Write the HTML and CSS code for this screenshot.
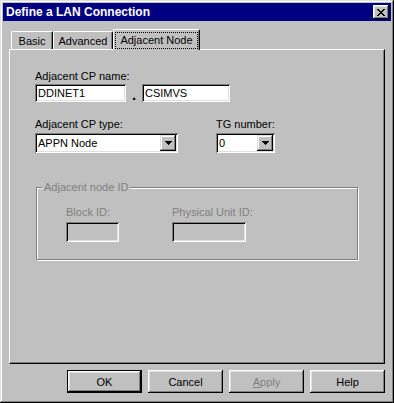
FILE: index.html
```html
<!DOCTYPE html>
<html lang="en">
<head>
    <meta charset="UTF-8">
    <meta name="viewport" content="width=device-width, initial-scale=1.0">
    <title>Define a LAN Connection</title>
    <link rel="stylesheet" href="styles.css">
</head>
<body>
    <div class="window">
        <div class="titlebar">
            <span class="title">Define a LAN Connection</span>
            <button class="close">
                <svg width="8" height="7" viewBox="0 0 8 7" shape-rendering="crispEdges">
                    <path fill="#000" d="M0 0h2v1H0zM6 0h2v1H6zM1 1h2v1H1zM5 1h2v1H5zM2 2h4v1H2zM3 3h2v1H3zM2 4h4v1H2zM1 5h2v1H1zM5 5h2v1H5zM0 6h2v1H0zM6 6h2v1H6z"/>
                </svg>
            </button>
        </div>

        <div class="dialog">
            <div class="tabs">
                <div class="tab tab-basic">Basic</div>
                <div class="tab tab-advanced">Advanced</div>
                <div class="tab tab-active"><span class="focus">Adjacent Node</span></div>
            </div>

            <div class="panel">
                <div class="label">Adjacent CP name:</div>
                <div class="name-row">
                    <div class="edit edit-net">DDINET1</div>
                    <span class="dot">.</span>
                    <div class="edit edit-cp">CSIMVS</div>
                </div>

                <div class="type-row">
                    <div class="col-type">
                        <div class="label">Adjacent CP type:</div>
                        <div class="combo combo-type">
                            <span class="combo-text">APPN Node</span>
                            <span class="combo-btn">
                                <svg width="7" height="4" viewBox="0 0 7 4" shape-rendering="crispEdges">
                                    <path fill="#000" d="M0 0h7v1H0zM1 1h5v1H1zM2 2h3v1H2zM3 3h1v1H3z"/>
                                </svg>
                            </span>
                        </div>
                    </div>
                    <div class="col-tg">
                        <div class="label">TG number:</div>
                        <div class="combo combo-tg">
                            <span class="combo-text">0</span>
                            <span class="combo-btn">
                                <svg width="7" height="4" viewBox="0 0 7 4" shape-rendering="crispEdges">
                                    <path fill="#000" d="M0 0h7v1H0zM1 1h5v1H1zM2 2h3v1H2zM3 3h1v1H3z"/>
                                </svg>
                            </span>
                        </div>
                    </div>
                </div>

                <!-- grupo desabilitado -->
                <div class="group">
                    <span class="group-title">Adjacent node ID</span>
                    <div class="group-row">
                        <div class="col-block">
                            <div class="label disabled">Block ID:</div>
                            <div class="edit edit-disabled edit-block"></div>
                        </div>
                        <div>
                            <div class="label disabled">Physical Unit ID:</div>
                            <div class="edit edit-disabled edit-pu"></div>
                        </div>
                    </div>
                </div>
            </div>

            <div class="buttons">
                <button class="btn btn-default">OK</button>
                <button class="btn">Cancel</button>
                <button class="btn btn-disabled"><u>A</u>pply</button>
                <button class="btn">Help</button>
            </div>
        </div>
    </div>
</body>
</html>
```

FILE: styles.css
```css
body {
    margin: 0;
    background-color: #c0c0c0;
    font-family: "Liberation Sans", Arial, sans-serif;
    font-size: 11px;
    color: #000;
}
.window {
    width: 394px;
    height: 403px;
    box-sizing: border-box;
    padding: 3px;
    background-color: #c0c0c0;
    box-shadow: inset -1px -1px #000, inset 1px 1px #dfdfdf, inset -2px -2px #808080, inset 2px 2px #fff;
}
.titlebar {
    height: 18px;
    background-color: #000080;
    display: flex;
    align-items: center;
    justify-content: space-between;
    padding: 0 2px 0 3px;
}
.title {
    color: #fff;
    font-weight: bold;
    font-size: 12px;
}
.close {
    width: 16px;
    height: 14px;
    border: none;
    padding: 0;
    background-color: #c0c0c0;
    display: flex;
    align-items: center;
    justify-content: center;
    box-shadow: inset -1px -1px #000, inset 1px 1px #fff, inset -2px -2px #808080, inset 2px 2px #dfdfdf;
}

/* abas */
.dialog {
    padding: 8px 6px 0;
}
.tabs {
    display: flex;
    align-items: flex-end;
    height: 20px;
    padding-left: 2px;
}
.tab {
    box-sizing: border-box;
    height: 18px;
    border-top: 1px solid #fff;
    border-left: 1px solid #fff;
    border-right: 1px solid #000;
    border-radius: 2px 2px 0 0;
    box-shadow: inset -1px 0 #808080;
    display: flex;
    align-items: center;
    justify-content: center;
}
.tab-basic {
    width: 42px;
}
.tab-advanced {
    width: 60px;
}
.tab-active {
    width: 87px;
    height: 21px;
    margin-bottom: -1px;
    padding-top: 2px;
    align-items: flex-start;
    background-color: #c0c0c0;
    position: relative;
    z-index: 1;
}
.focus {
    border: 1px dotted #000;
    padding: 1px 4px;
    line-height: 13px;
}

/* painel */
.panel {
    box-sizing: border-box;
    height: 315px;
    border-top: 1px solid #fff;
    border-left: 1px solid #fff;
    border-right: 1px solid #000;
    border-bottom: 1px solid #000;
    box-shadow: inset -1px -1px #808080;
    padding: 20px 0 0 25px;
}
.label {
    line-height: 13px;
    margin-bottom: 1px;
}
.name-row {
    display: flex;
}
.edit {
    box-sizing: border-box;
    height: 18px;
    line-height: 18px;
    padding: 0 3px;
    background-color: #fff;
    box-shadow: inset 1px 1px #808080, inset -1px -1px #fff, inset 2px 2px #000, inset -2px -2px #dfdfdf;
}
.edit-net {
    width: 91px;
}
.edit-cp {
    width: 88px;
}
.dot {
    width: 16px;
    height: 18px;
    text-align: center;
    font-weight: bold;
    font-size: 15px;
    line-height: 22px;
}
.type-row {
    display: flex;
    margin-top: 16px;
}
.type-row .label {
    margin-bottom: 2px;
}
.col-type {
    width: 181px;
}
.combo {
    box-sizing: border-box;
    height: 20px;
    padding: 2px;
    display: flex;
    align-items: center;
    background-color: #fff;
    box-shadow: inset 1px 1px #808080, inset -1px -1px #fff, inset 2px 2px #000, inset -2px -2px #dfdfdf;
}
.combo-type {
    width: 143px;
}
.combo-tg {
    width: 59px;
}
.combo-text {
    flex: 1;
    padding-left: 1px;
    line-height: 16px;
}
.combo-btn {
    width: 16px;
    height: 16px;
    display: flex;
    align-items: center;
    justify-content: center;
    background-color: #c0c0c0;
    box-shadow: inset -1px -1px #000, inset 1px 1px #dfdfdf, inset -2px -2px #808080, inset 2px 2px #fff;
}

/* grupo */
.group {
    position: relative;
    box-sizing: border-box;
    width: 322px;
    height: 73px;
    margin: 34px 0 0 1px;
    padding: 18px 0 0 29px;
    border: 1px solid #808080;
    box-shadow: inset 1px 1px #fff, 1px 1px #fff;
}
.group-title {
    position: absolute;
    top: -7px;
    left: 5px;
    padding: 0 2px;
    line-height: 13px;
    color: #808080;
    background-color: #c0c0c0;
}
.group-row {
    display: flex;
}
.group .label {
    margin-bottom: 3px;
}
.col-block {
    width: 106px;
}
.disabled {
    color: #808080;
}
.edit-disabled {
    height: 20px;
    background-color: #c0c0c0;
}
.edit-block {
    width: 53px;
}
.edit-pu {
    width: 74px;
}

/* botoes */
.buttons {
    display: flex;
    justify-content: flex-end;
    gap: 6px;
    margin-top: 6px;
}
.btn {
    width: 75px;
    height: 23px;
    border: none;
    padding: 0;
    font-family: inherit;
    font-size: 11px;
    color: #000;
    background-color: #c0c0c0;
    box-shadow: inset -1px -1px #000, inset 1px 1px #fff, inset -2px -2px #808080, inset 2px 2px #dfdfdf;
}
.btn-default {
    box-shadow: inset 0 0 0 1px #000, inset -2px -2px #000, inset 2px 2px #fff, inset -3px -3px #808080, inset 3px 3px #dfdfdf;
}
.btn-disabled {
    color: #808080;
}
```
